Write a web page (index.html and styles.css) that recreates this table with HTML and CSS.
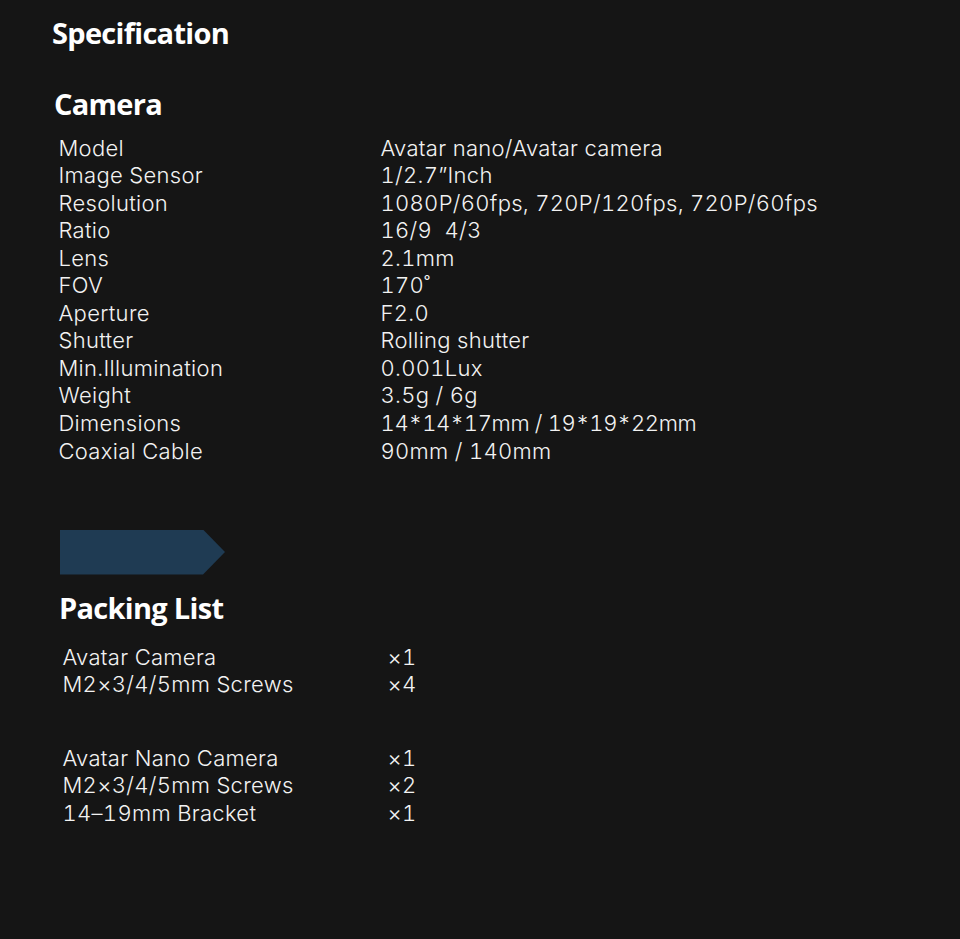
FILE: index.html
```html
<!DOCTYPE html>
<html lang="en">
<head>
<meta charset="utf-8">
<title>Specification</title>
<link rel="stylesheet" href="styles.css">
</head>
<body>
<main class="page">
  <h1 class="title">Specification</h1>

  <section class="section camera">
    <h2 class="heading">Camera</h2>
    <dl class="spec">
      <dt>Model</dt><dd>Avatar nano/Avatar camera</dd>
      <dt>Image Sensor</dt><dd>1/2.7”Inch</dd>
      <dt>Resolution</dt><dd>1080P/60fps, 720P/120fps, 720P/60fps</dd>
      <dt>Ratio</dt><dd>16/9&nbsp;&nbsp;4/3</dd>
      <dt>Lens</dt><dd>2.1mm</dd>
      <dt>FOV</dt><dd>170˚</dd>
      <dt>Aperture</dt><dd>F2.0</dd>
      <dt>Shutter</dt><dd>Rolling shutter</dd>
      <dt>Min.Illumination</dt><dd>0.001Lux</dd>
      <dt>Weight</dt><dd>3.5g / 6g</dd>
      <dt>Dimensions</dt><dd class="tight">14*14*17mm / 19*19*22mm</dd>
      <dt>Coaxial Cable</dt><dd>90mm / 140mm</dd>
    </dl>
  </section>

  <div class="tag" aria-hidden="true"></div>

  <section class="section packing">
    <h2 class="heading">Packing List</h2>
    <dl class="pack">
      <dt>Avatar Camera</dt><dd>×1</dd>
      <dt>M2×3/4/5mm Screws</dt><dd>×4</dd>
    </dl>
    <dl class="pack second">
      <dt>Avatar Nano Camera</dt><dd>×1</dd>
      <dt>M2×3/4/5mm Screws</dt><dd>×2</dd>
      <dt>14–19mm Bracket</dt><dd>×1</dd>
    </dl>
  </section>
</main>
</body>
</html>
```

FILE: styles.css
```css
html, body {
  margin: 0;
  padding: 0;
}

body {
  background: #151515;
  color: #f2f2f2;
  font-family: Inter, "Liberation Sans", Arial, sans-serif;
  width: 960px;
  height: 939px;
  overflow: hidden;
}

.page {
  padding: 15px 0 0 0;
}

.title,
.heading {
  font-family: "Open Sans", "Noto Sans", sans-serif;
  font-weight: 700;
  font-size: 29px;
  line-height: 36px;
  letter-spacing: -0.7px;
  margin: 0;
  color: #ffffff;
}

.title {
  padding-left: 52px;
}

.camera {
  margin-top: 35px;
}

.camera .heading {
  padding-left: 54px;
}

.spec,
.pack {
  display: grid;
  margin: 0;
  font-size: 22px;
  font-weight: 300;
  line-height: 27.55px;
  letter-spacing: 0.3px;
  font-variant-numeric: tabular-nums;
}

.spec {
  grid-template-columns: 322px 1fr;
  padding-left: 58.5px;
  margin-top: 12.5px;
}

.spec dt,
.spec dd,
.pack dt,
.pack dd {
  margin: 0;
  white-space: nowrap;
}

.spec .tight {
  letter-spacing: -0.35px;
}

.tag {
  margin: 64.5px 0 0 60px;
  width: 165px;
  height: 45px;
  background: #1f3b53;
  clip-path: polygon(0 0, 143px 0, 165px 50%, 143px 100%, 0 100%);
}

.packing {
  margin-top: 15.4px;
}

.packing .heading {
  padding-left: 59px;
}

.pack {
  grid-template-columns: 325px 1fr;
  padding-left: 62.5px;
  margin-top: 17.8px;
}

.pack.second {
  margin-top: 46px;
}
```
